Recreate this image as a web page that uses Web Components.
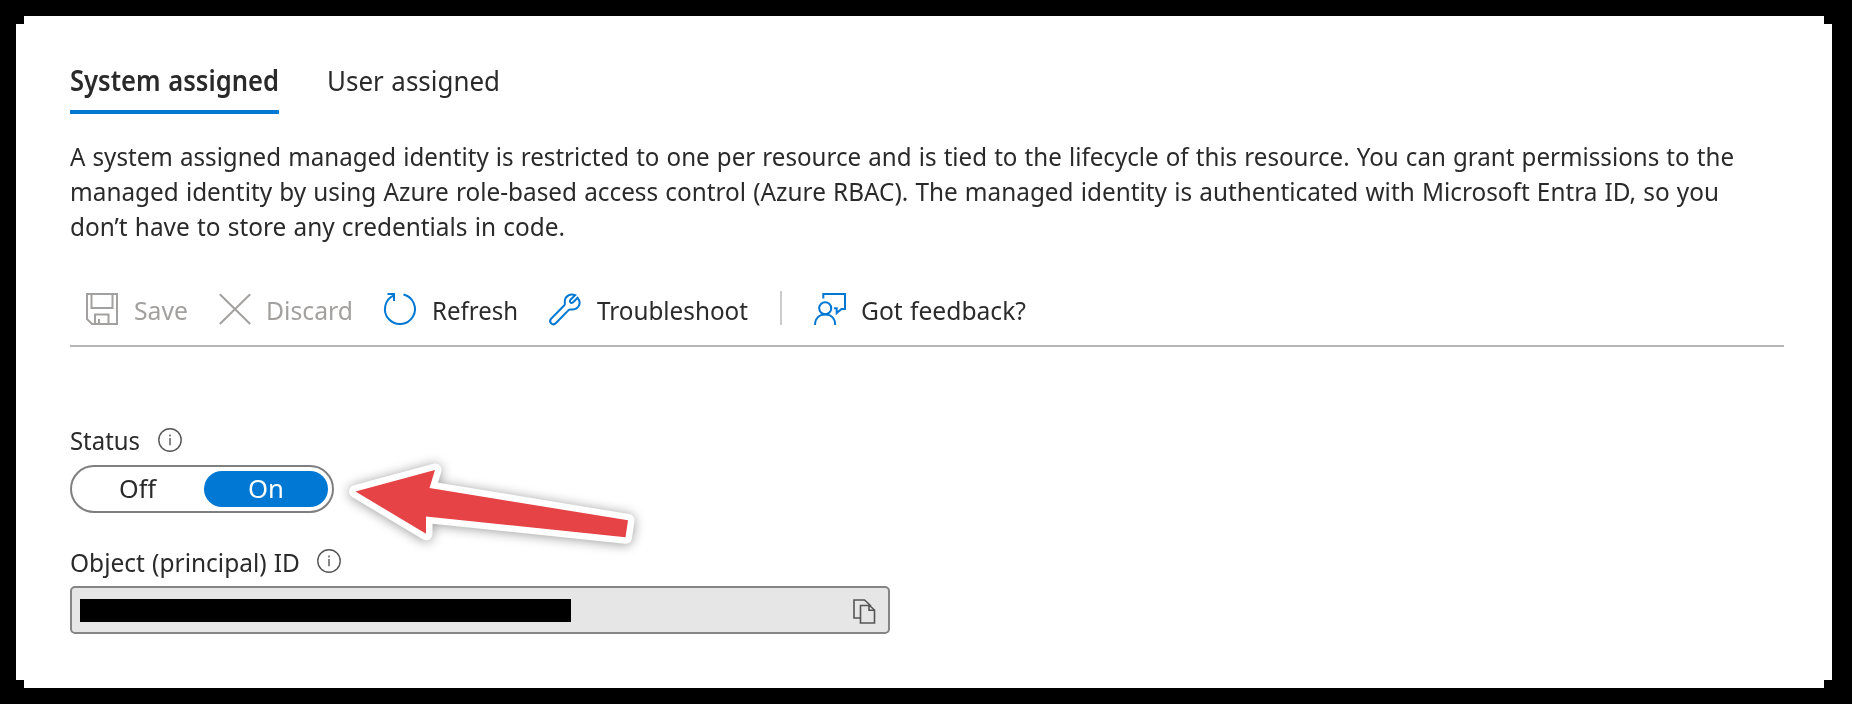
<!DOCTYPE html>
<html lang="en">
<head>
<meta charset="utf-8">
<title>Managed identity</title>
<style>
html,body{margin:0;background:#000;height:704px;overflow:hidden}
body{font-family:"Noto Sans","Open Sans",sans-serif;font-size:26px;color:#2a2a2a}
</style>
</head>
<body>
<identity-page></identity-page>
<script>
const define = (name, html, setup) => customElements.define(name, class extends HTMLElement {
  connectedCallback() {
    if (this.shadowRoot) return;
    const root = this.attachShadow({mode: 'open'});
    root.innerHTML = html;
    if (setup) setup(this, root);
  }
});

// One line of text, condensed horizontally to fill the given width.
define('fit-text', `<style>
:host{display:block;white-space:nowrap;flex:none;line-height:inherit}
span{display:inline-block;transform-origin:0 0;word-spacing:.035em}
</style><span><slot></slot></span>`, (el, root) => {
  const w = +el.getAttribute('width'), s = root.querySelector('span');
  const natural = s.getBoundingClientRect().width;
  s.style.transform = `scaleX(${w / natural})`;
  el.style.width = w + 'px';
});

const icons = {
  save: '<path d="M1 1H31V31H6L1 26ZM5.5 1V15H26.5V1M9 31V21.5H22.5V31M13 31V26"/>',
  discard: '<path d="M.8 1.2 31.2 31M31.2 1.2.8 31"/>',
  refresh: '<path d="M20.5 1.5A15 15 0 1 1 10.8 2.4M4.5 1H11V8"/>',
  wrench: '<path d="M28.6 4.8 24.2 9.2A1.8 1.8 0 0 1 21.4 6.8L26.2 2.2C21 0 15.8 3.5 15.8 8.5C15.8 10 16.2 11.3 15.4 12.2L2.2 25.6C-.8 29 3.6 33.4 7 30L19.8 16.9C20.8 16 21.7 16.5 23.5 16.5C29.5 16.2 33 10.5 28.6 4.8Z"/>',
  feedback: '<circle cx="11.2" cy="15.2" r="6"/><path d="M1 32C1 25 5.4 21.5 11.2 21.5S21.2 25 21.2 32M9.3 5.5V1H31V16H27.5L22.7 20V15.2H20"/>',
  copy: '<path d="M7.5 19H1V1H11.5L18 7M7.5 6.5H16.5L21.5 11V24H7.5ZM16 6.5V11.2H21.5"/>',
  info: '<circle cx="12" cy="12" r="11.2"/><path d="M12 10V17.2M12 6.4V8.4"/>'
};
define('line-icon', `<style>
:host{display:block;flex:none}
svg{display:block;fill:none;stroke:currentColor;overflow:visible}
</style><svg></svg>`, (el, root) => {
  const n = el.getAttribute('name'), s = root.querySelector('svg');
  const [w, h] = n === 'copy' ? [22.5, 25] : n === 'info' ? [24, 24] : [32, 32];
  s.setAttribute('viewBox', `0 0 ${w} ${h}`);
  s.setAttribute('width', w); s.setAttribute('height', h);
  s.setAttribute('stroke-width', n === 'info' ? 1.4 : n === 'copy' ? 1.6 : 2);
  s.innerHTML = icons[n];
});

define('tab-item', `<style>
:host{display:block;height:55px;line-height:42px;font-size:28px;box-sizing:border-box}
:host([selected]){font-weight:600;border-bottom:4px solid #0078d4}
</style><slot></slot>`);

define('tool-button', `<style>
:host{display:flex;align-items:center;height:34px;line-height:34px;color:#2b2b2b}
line-icon{color:#0078d4;margin-top:-2px}
:host([disabled]){color:#a3a19f}
:host([disabled]) line-icon{color:#a3a19f}
</style><line-icon></line-icon><slot></slot>`, (el, root) => {
  const old = root.querySelector('line-icon'), ic = document.createElement('line-icon');
  ic.setAttribute('name', el.getAttribute('icon'));
  ic.style.marginRight = el.getAttribute('gap') + 'px';
  old.replaceWith(ic);
});

define('field-label', `<style>
:host{display:flex;align-items:flex-start;height:34px;line-height:34px}
line-icon{color:#555;margin-top:var(--info-top,5px)}
</style><slot></slot><line-icon name="info"></line-icon>`);

define('toggle-switch', `<style>
:host{display:flex;box-sizing:border-box;width:264px;height:48px;border:2px solid #7f7f7f;border-radius:24px;padding:4px;line-height:35px}
div{display:flex;height:36px}
.off{width:128px;padding-left:43px;box-sizing:border-box}
.on{width:124px;padding-left:44px;box-sizing:border-box;background:#0078d4;color:#fff;border-radius:18px}
</style><div class="off"><fit-text width="37">Off</fit-text></div><div class="on"><fit-text width="36">On</fit-text></div>`);

define('redacted-field', `<style>
:host{display:flex;align-items:center;justify-content:space-between;box-sizing:border-box;width:820px;height:48px;border:2px solid #858585;border-radius:5px;background:#e6e6e6;padding:0 13px 0 8px;color:#555}
i{display:block;width:491px;height:23px;background:#000}
line-icon{margin-top:2px}
</style><i></i><line-icon name="copy"></line-icon>`);

define('arrow-mark', `<style>
:host{position:absolute;left:330px;top:440px}
svg{display:block;overflow:visible;filter:drop-shadow(0 1px 6px #0006)}
</style><svg width="330" height="130"><path d="M25.5 51.5 105 30 99.5 48 298 80.3 295.5 97.3 96 76.5V93.8Z" fill="#fff" stroke="#fff" stroke-width="13" stroke-linejoin="round"/><path d="M25.5 51.5 105 30 99.5 48 298 80.3 295.5 97.3 96 76.5V93.8Z" fill="#e54345"/></svg>`);

define('identity-page', `<style>
:host{display:block;box-sizing:border-box;height:704px;padding:16px 20px 16px 16px}
main{height:672px;box-sizing:border-box;background:#fff;padding:43px 48px 0 54px;
clip-path:polygon(8px 0,1808px 0,1808px 8px,1816px 8px,1816px 664px,1808px 664px,1808px 672px,8px 672px,8px 664px,0 664px,0 8px,8px 8px)}
nav{display:flex;gap:48px}
.desc{margin-top:25px;line-height:35px}
.bar{display:flex;height:54px;margin-top:49px;border-bottom:2px solid #b5b5b5;padding:0 0 0 16px;box-sizing:border-box}
.sep{width:2px;height:34px;background:#ccc;margin:-2px 32px 0 32px}
.status{margin-top:76px}
toggle-switch{margin-top:8px}
.oid{margin-top:32px;--info-top:4px}
redacted-field{margin-top:7px}
</style>
<main>
<nav><tab-item selected><fit-text width="209">System assigned</fit-text></tab-item><tab-item><fit-text width="173">User assigned</fit-text></tab-item></nav>
<section class="desc">
<fit-text width="1664">A system assigned managed identity is restricted to one per resource and is tied to the lifecycle of this resource. You can grant permissions to the</fit-text>
<fit-text width="1649">managed identity by using Azure role-based access control (Azure RBAC). The managed identity is authenticated with Microsoft Entra ID, so you</fit-text>
<fit-text width="495">don’t have to store any credentials in code.</fit-text>
</section>
<section class="bar">
<tool-button icon="save" gap="16" disabled><fit-text width="54">Save</fit-text></tool-button>
<tool-button icon="discard" gap="15" disabled style="margin-left:31px"><fit-text width="87">Discard</fit-text></tool-button>
<tool-button icon="refresh" gap="17" style="margin-left:30px"><fit-text width="86">Refresh</fit-text></tool-button>
<tool-button icon="wrench" gap="16" style="margin-left:31px"><fit-text width="151">Troubleshoot</fit-text></tool-button>
<div class="sep"></div>
<tool-button icon="feedback" gap="15"><fit-text width="165">Got feedback?</fit-text></tool-button>
</section>
<field-label class="status"><fit-text width="70" style="margin-right:18px">Status</fit-text></field-label>
<toggle-switch></toggle-switch>
<field-label class="oid"><fit-text width="230" style="margin-right:17px">Object (principal) ID</fit-text></field-label>
<redacted-field></redacted-field>
</main>
<arrow-mark></arrow-mark>`);
</script>
</body>
</html>
